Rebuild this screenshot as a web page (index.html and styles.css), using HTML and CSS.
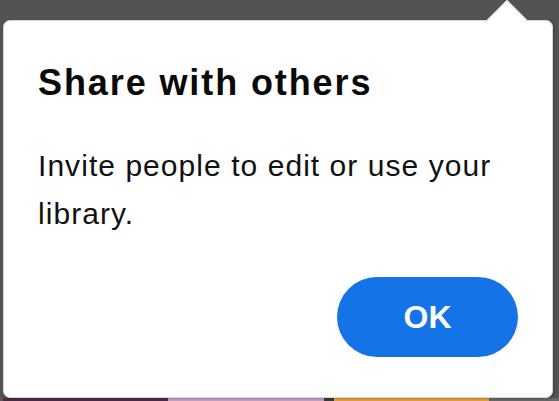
FILE: index.html
```html
<!DOCTYPE html>
<html lang="en">
<head>
<meta charset="utf-8">
<title>Share with others</title>
<link rel="stylesheet" href="styles.css">
</head>
<body>
<div class="page">
  <div class="popover">
    <span class="arrow"></span>
    <h1 class="title">Share with others</h1>
    <p class="text">Invite people to edit or use your library.</p>
    <div class="actions">
      <button class="ok" type="button">OK</button>
    </div>
  </div>
  <div class="strip">
    <span class="seg seg-edge"></span>
    <span class="seg seg-plum"></span>
    <span class="seg seg-lilac"></span>
    <span class="seg seg-dark"></span>
    <span class="seg seg-orange"></span>
    <span class="seg seg-rest"></span>
  </div>
</div>
</body>
</html>
```

FILE: styles.css
```css
html, body {
  margin: 0;
  padding: 0;
}

body {
  width: 559px;
  height: 401px;
  overflow: hidden;
  background: #535353;
  font-family: "Liberation Sans", Arial, sans-serif;
}

.page {
  display: flex;
  flex-direction: column;
  padding-top: 20px;
}

.popover {
  position: relative;
  box-sizing: border-box;
  width: 550px;
  margin-left: 3px;
  background: #fff;
  border: 1px solid #d6d6d6;
  border-radius: 7px;
  padding: 41px 34px 40px 34px;
  box-shadow: 1px 1px 3px rgba(0, 0, 0, 0.25);
  display: flex;
  flex-direction: column;
}

.arrow {
  position: absolute;
  left: 488px;
  top: -15px;
  width: 30px;
  height: 30px;
  box-sizing: border-box;
  background: #fff;
  border-top: 1px solid #d6d6d6;
  border-left: 1px solid #d6d6d6;
  transform: rotate(45deg);
}

.title {
  margin: 0;
  font-size: 36px;
  line-height: 41px;
  font-weight: 700;
  letter-spacing: 1.9px;
  color: #0a0a0a;
}

.text {
  margin: 39px 0 0 0;
  font-size: 30px;
  line-height: 48px;
  letter-spacing: 1.05px;
  color: #111;
}

.actions {
  display: flex;
  justify-content: flex-end;
  margin-top: 39px;
}

.ok {
  width: 181px;
  height: 80px;
  border: none;
  border-radius: 40px;
  background: #1473e6;
  color: #fff;
  font-family: "Liberation Sans", Arial, sans-serif;
  font-size: 32px;
  font-weight: 700;
  padding: 0;
  margin-right: 0;
}

.strip {
  display: flex;
  height: 3px;
}

.seg {
  display: block;
  height: 3px;
}

.seg-edge { width: 3px; background: #5a5a5a; }
.seg-plum { width: 165px; background: #4d2a4a; }
.seg-lilac { width: 156px; background: #c7a4c6; }
.seg-dark { width: 10px; background: #3d3d3d; }
.seg-orange { width: 155px; background: #f0a03c; }
.seg-rest { flex: 1; background: #6a6a6a; }
```
